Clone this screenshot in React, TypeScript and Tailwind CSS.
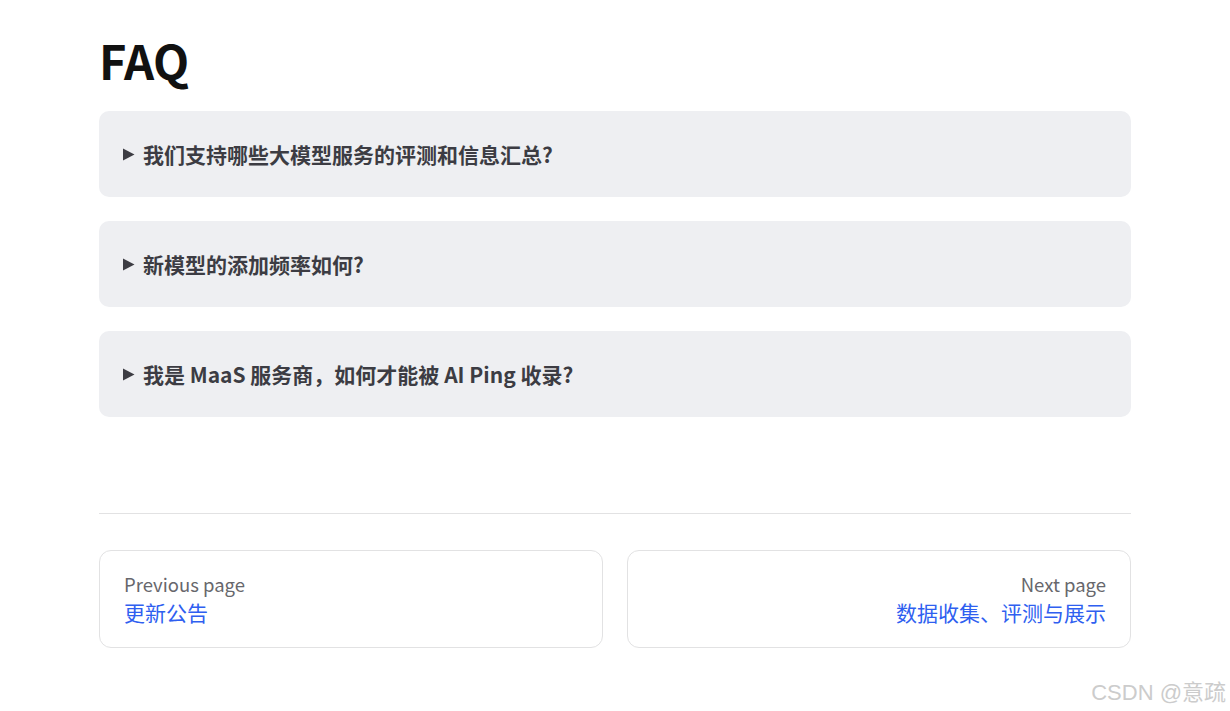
import React from "react";

const faqs = [
  "我们支持哪些大模型服务的评测和信息汇总?",
  "新模型的添加频率如何?",
  "我是 MaaS 服务商，如何才能被 AI Ping 收录?",
];

export default function App() {
  return (
    <div className="relative min-h-[711px] w-full bg-white font-['Noto_Sans_CJK_SC','Noto_Sans',sans-serif]">
      <div className="mx-auto w-[1032px] pt-[28px]">
        <h1 className="text-[47px] font-bold leading-[64px] tracking-[-0.5px] text-[#111111]">FAQ</h1>
        <div className="mt-[19px] flex flex-col gap-[24px]">
          {faqs.map((q) => (
            <div key={q} className="flex h-[86px] items-center rounded-[10px] bg-[#eeeff2] pl-[24px]">
              <svg width="12" height="13" viewBox="0 0 12 13" className="mr-[8px] shrink-0">
                <path d="M0 0.5 L11.5 6.5 L0 12.5 Z" fill="#3c3c43" />
              </svg>
              <span className="text-[21px] font-bold leading-[28px] text-[#3c3c43]">{q}</span>
            </div>
          ))}
        </div>
        <div className="mt-[96px] border-t border-[#e2e2e3]" />
        <div className="mt-[36px] grid grid-cols-2 gap-[24px]">
          <div className="flex h-[98px] flex-col justify-center rounded-[12px] border border-[#e2e2e3] px-[24px]">
            <div className="text-[18.5px] leading-[26px] text-[#67676c]">Previous page</div>
            <div className="text-[21px] leading-[31px] text-[#2f5ff0]">更新公告</div>
          </div>
          <div className="flex h-[98px] flex-col justify-center rounded-[12px] border border-[#e2e2e3] px-[24px] text-right">
            <div className="text-[18.5px] leading-[26px] text-[#67676c]">Next page</div>
            <div className="text-[21px] leading-[31px] text-[#2f5ff0]">数据收集、评测与展示</div>
          </div>
        </div>
      </div>
      <div className="absolute bottom-[4px] right-[4px] font-['Liberation_Sans','Noto_Sans_CJK_SC',sans-serif] text-[22px] leading-[28px] text-[#cccccc]">
        CSDN @意疏
      </div>
    </div>
  );
}
